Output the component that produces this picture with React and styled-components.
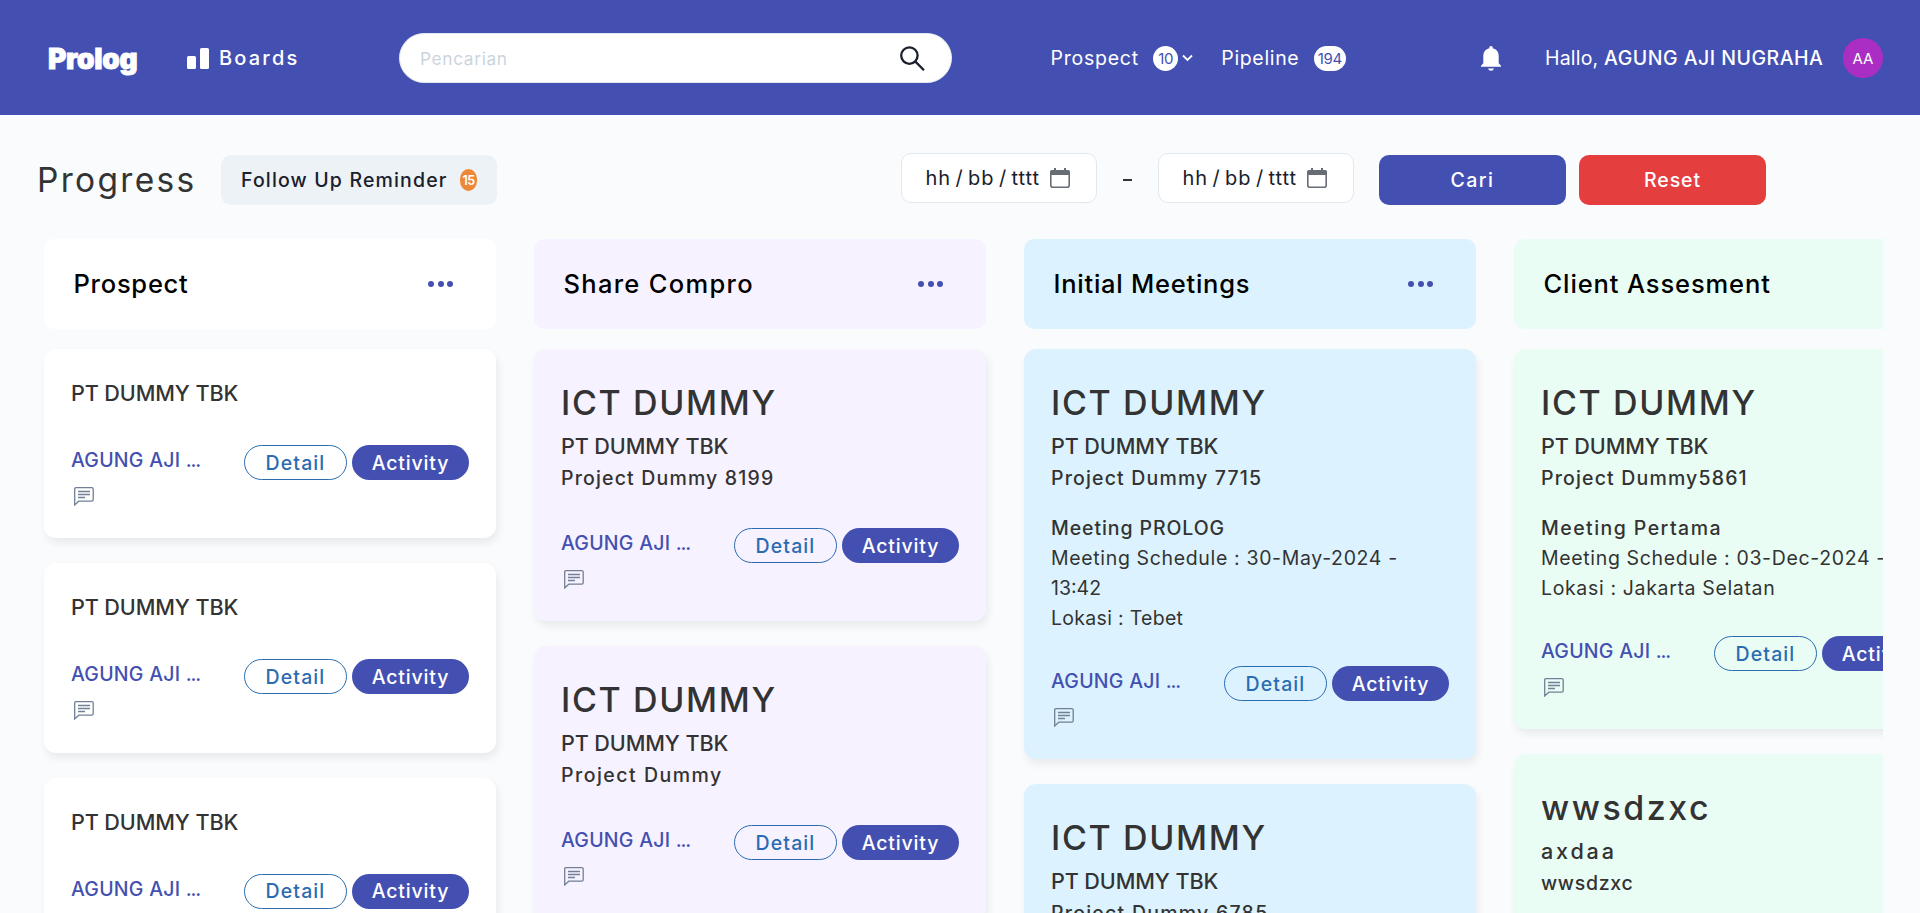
import React from "react";
import styled, { createGlobalStyle } from "styled-components";

const Global = createGlobalStyle`
  * { box-sizing: border-box; }
  html, body { margin: 0; height: 913px; overflow: hidden; background: #fafbfd; }
  body { font-family: Inter, "Liberation Sans", sans-serif; color: #333; }
`;

const Page = styled.div`
  width: 1920px;
  height: 913px;
  overflow: hidden;
  display: flex;
  flex-direction: column;
`;

const Txt = styled.span`
  white-space: nowrap;
  letter-spacing: ${(p) => p.$ls || 0}px;
`;

const Header = styled.header`
  flex: none;
  height: 115px;
  background: #4350b2;
  color: #fff;
  display: flex;
  align-items: center;
  padding: 1px 37px 0 47px;
  font-size: 19.5px;
`;

const Logo = styled.div`
  width: 140px;
  font-size: 28px;
  font-weight: 900;
  line-height: 40px;
  letter-spacing: -0.3px;
  -webkit-text-stroke: 0.9px #fff;
  padding: 2px 0 0 1px;
`;

const BoardsLink = styled.div`
  width: 212px;
  display: flex;
  align-items: center;
  gap: 10px;
  font-size: 20px;
  font-weight: 500;
`;

const Search = styled.div`
  width: 553px;
  height: 50px;
  border-radius: 25px;
  border: 1px solid #e2e8f0;
  background: #fff;
  color: #cbd5e0;
  font-size: 17.3px;
  display: flex;
  align-items: center;
  justify-content: space-between;
  padding: 0 26px 0 20px;
`;

const NavItem = styled.div`
  display: flex;
  align-items: center;
  margin-left: ${(p) => p.$ml}px;
`;

const CountBadge = styled.span`
  width: ${(p) => p.$w}px;
  height: 25px;
  border-radius: 12.5px;
  background: #fff;
  color: #4350b2;
  font-size: 15px;
  letter-spacing: -0.3px;
  display: flex;
  align-items: center;
  justify-content: center;
  margin-left: 14.5px;
  margin-right: 4px;
`;

const User = styled.div`
  margin-left: auto;
  display: flex;
  align-items: center;
`;

const Greeting = styled.div`
  width: 298px;
  white-space: nowrap;
`;

const Strong = styled(Txt)`
  font-weight: 500;
`;

const Avatar = styled.div`
  width: 40px;
  height: 40px;
  border-radius: 50%;
  background: #aa2ec4;
  font-size: 15px;
  display: flex;
  align-items: center;
  justify-content: center;
`;

const Toolbar = styled.section`
  flex: none;
  height: 124px;
  display: flex;
  align-items: flex-start;
  padding: 38px 154px 0 37px;
`;

const Title = styled.h1`
  margin: 2px 0 0;
  width: 184px;
  font-size: 33.5px;
  line-height: 50px;
  font-weight: 400;
`;

const Button = styled.button`
  border: 0;
  margin: 0;
  padding: 0;
  font-family: inherit;
  font-size: 19.5px;
  font-weight: 500;
  cursor: pointer;
`;

const Reminder = styled(Button)`
  width: 276px;
  height: 50px;
  margin-top: 2px;
  border-radius: 10px;
  background: #edf2f7;
  color: #1a202c;
  display: flex;
  align-items: center;
  justify-content: space-between;
  padding: 0 20px;
`;

const ReminderCount = styled.span`
  width: 17px;
  height: 22px;
  border-radius: 8.5px / 10px;
  background: #ed8936;
  color: #fff;
  font-size: 12.5px;
  font-weight: 600;
  letter-spacing: -0.6px;
  display: flex;
  align-items: center;
  justify-content: center;
`;

const Filters = styled.div`
  margin-left: auto;
  display: flex;
  align-items: flex-start;
`;

const DateField = styled.div`
  width: 196px;
  height: 50px;
  border: 1px solid #e2e8f0;
  border-radius: 10px;
  background: #fff;
  color: #1a202c;
  font-size: 20px;
  word-spacing: -2px;
  display: flex;
  align-items: center;
  justify-content: space-between;
  padding: 0 26.5px 0 23.5px;
`;

const Dash = styled.span`
  width: 61px;
  height: 50px;
  display: flex;
  align-items: center;
  justify-content: center;
  padding-top: 3px;

  &::before {
    content: "";
    width: 9px;
    height: 2px;
    background: #333;
  }
`;

const ActionButton = styled(Button)`
  width: 187px;
  height: 50px;
  margin: 2px 0 0 ${(p) => p.$ml}px;
  border-radius: 10px;
  background: ${(p) => p.$bg};
  color: #fff;
`;

const Board = styled.main`
  flex: 1;
  min-height: 0;
  width: 1883px;
  overflow: hidden;
  display: flex;
  gap: 38px;
  padding-left: 44px;
`;

const Column = styled.section`
  flex: none;
  width: 452px;
  display: flex;
  flex-direction: column;
`;

const ColumnHead = styled.div`
  flex: none;
  height: 90px;
  border-radius: 10px;
  background: ${(p) => p.$bg};
  color: #000;
  font-size: 25.5px;
  font-weight: 500;
  display: flex;
  align-items: center;
  justify-content: space-between;
  padding: 0 43px 2px 29.5px;
  margin-bottom: 20px;
`;

const Dots = styled.span`
  display: flex;
  gap: 3.4px;
  padding-top: 1px;

  i {
    width: 6px;
    height: 6px;
    border-radius: 50%;
    background: #4350b2;
  }
`;

const Card = styled.article`
  flex: none;
  border-radius: 12px;
  background: ${(p) => p.$bg};
  box-shadow: 2px 5px 8px rgba(0, 0, 0, 0.07);
  padding: ${(p) => (p.$compact ? 28 : 27)}px 27px 0;
  margin-bottom: 25px;
`;

const CardTitle = styled.h2`
  margin: 0;
  font-size: 34px;
  font-weight: 500;
  line-height: 54px;
`;

const Company = styled.div`
  font-size: 21.6px;
  font-weight: 500;
  line-height: 33px;
`;

const Project = styled.div`
  font-size: 19.5px;
  font-weight: 500;
  line-height: 30px;
`;

const Meeting = styled.div`
  margin-top: 20px;
  font-size: 19.5px;
  line-height: 30px;
`;

const CardFoot = styled.div`
  height: ${(p) => p.$h}px;
  margin-top: ${(p) => p.$mt}px;
  display: flex;
  justify-content: space-between;
`;

const Owner = styled.div`
  color: #4350b2;
  font-size: 19.5px;
  font-weight: 500;
  line-height: 30px;
  display: flex;
  flex-direction: column;
  gap: 12px;

  svg { margin-left: 2.5px; }
`;

const Actions = styled.div`
  display: flex;
  gap: 5px;
`;

const Pill = styled(Button)`
  width: ${(p) => (p.$solid ? 117 : 103)}px;
  height: 35px;
  border-radius: 18px;
  border: ${(p) => (p.$solid ? "0" : "1px solid #2b6cb0")};
  background: ${(p) => (p.$solid ? "#4350b2" : "transparent")};
  color: ${(p) => (p.$solid ? "#fff" : "#2b6cb0")};
`;

const BarsIcon = () => (
  <svg width="22" height="21" viewBox="0 0 22 21" fill="#fff">
    <rect x="0" y="8" width="9" height="13" rx="1.5" />
    <rect x="13" y="0" width="9" height="21" rx="1.5" />
  </svg>
);

const SearchIcon = () => (
  <svg width="25" height="25" viewBox="0 0 25 25" fill="none" stroke="#1a202c" strokeWidth="2.3">
    <circle cx="9.4" cy="9.6" r="8.2" />
    <path d="M15.4 15.6 24 24.2" />
  </svg>
);

const ChevronIcon = () => (
  <svg width="11" height="8" viewBox="0 0 11 8" fill="none" stroke="#fff" strokeWidth="1.8">
    <path d="m1 1.5 4.5 4.5L10 1.5" />
  </svg>
);

const BellIcon = () => (
  <svg width="20" height="25" viewBox="0 0 20 25" fill="#fff">
    <path d="M7 22.4h6q-.8 2.3-3 2.3t-3-2.3ZM0 20.800v-1l2.300-2.600V9.500Q2.700 3.500 8.200 2.200V1.800a1.800 1.800 0 0 1 3.600 0v.4q5.500 1.300 5.900 7.300v7.700l2.300 2.600v1Z" />
  </svg>
);

const CalendarIcon = () => (
  <svg width="20" height="20" viewBox="0 0 20 20">
    <path d="M5 0v3M15 0v3" stroke="#676c75" strokeWidth="2" />
    <rect x=".8" y="3" width="18.4" height="16.2" rx="2" fill="none" stroke="#676c75" strokeWidth="1.6" />
    <path d="M0 7V4q0-2 2-2h16q2 0 2 2v3Z" fill="#676c75" />
  </svg>
);

const CommentIcon = () => (
  <svg width="20" height="19" viewBox="0 0 20 19" fill="none" stroke="#718096" strokeWidth="1.3">
    <path d="M.7 17.9V2Q.7.7 2 .7h15.800q1.400 0 1.400 1.400v10.700q0 1.400-1.400 1.400H4.800Z" />
    <path d="M4 4.500h12M4 7.500h12M4 10.500h7" />
  </svg>
);

const columns = [
  {
    title: "Prospect", bg: "#ffffff", ls: 0.75,
    cards: [{ company: "PT DUMMY TBK" }, { company: "PT DUMMY TBK" }, { company: "PT DUMMY TBK" }],
  },
  {
    title: "Share Compro", bg: "#f7f2ff", ls: 1.3,
    cards: [
      { title: "ICT DUMMY", company: "PT DUMMY TBK", project: "Project Dummy 8199" },
      { title: "ICT DUMMY", company: "PT DUMMY TBK", project: "Project Dummy" },
    ],
  },
  {
    title: "Initial Meetings", bg: "#dcf3ff", ls: 0.75,
    cards: [
      {
        title: "ICT DUMMY", company: "PT DUMMY TBK", project: "Project Dummy 7715",
        meeting: ["Meeting PROLOG", "Meeting Schedule : 30-May-2024 -", "13:42", "Lokasi : Tebet"],
      },
      { title: "ICT DUMMY", company: "PT DUMMY TBK", project: "Project Dummy 6785" },
    ],
  },
  {
    title: "Client Assesment", bg: "#eafdf5", ls: 0.88,
    cards: [
      {
        title: "ICT DUMMY", company: "PT DUMMY TBK", project: "Project Dummy5861",
        meeting: ["Meeting Pertama", "Meeting Schedule : 03-Dec-2024 -", "Lokasi : Jakarta Selatan"],
      },
      { title: "wwsdzxc", titleLs: 2.5, company: "axdaa", companyLs: 2.8, project: "wwsdzxc", projectLs: 0.7 },
    ],
  },
];

// Letter spacing of the lines whose width differs from the default tracking.
const tracking = {
  "Project Dummy": 1.5,
  "Project Dummy 6785": 1.25,
  "Meeting PROLOG": 0.9,
  "Meeting Pertama": 1.45,
  "13:42": 0,
  "Lokasi : Tebet": 0.3,
};

function BoardCard({ card, bg }) {
  const gap = card.meeting ? 33 : 35;
  return (
    <Card $bg={bg} $compact={!card.title}>
      {card.title && <CardTitle><Txt $ls={card.titleLs ?? 1.65}>{card.title}</Txt></CardTitle>}
      <Company><Txt $ls={card.companyLs ?? -0.12}>{card.company}</Txt></Company>
      {card.project && (
        <Project><Txt $ls={card.projectLs ?? tracking[card.project] ?? 1.17}>{card.project}</Txt></Project>
      )}
      {card.meeting && (
        <Meeting>
          {card.meeting.map((line, i) => {
            const Line = i === 0 ? Strong : Txt;
            return <div key={line}><Line $ls={tracking[line] ?? 0.65}>{line}</Line></div>;
          })}
        </Meeting>
      )}
      <CardFoot $mt={gap} $h={card.meeting ? 93 : card.title ? 93.4 : 93.3}>
        <Owner>
          <Txt $ls={0.25}>AGUNG AJI <Txt $ls={-1.1}>...</Txt></Txt>
          <CommentIcon />
        </Owner>
        <Actions>
          <Pill><Txt $ls={1.1}>Detail</Txt></Pill>
          <Pill $solid><Txt $ls={0.85}>Activity</Txt></Pill>
        </Actions>
      </CardFoot>
    </Card>
  );
}

export default function App() {
  return (
    <Page>
      <Global />
      <Header>
        <Logo>Prolog</Logo>
        <BoardsLink><BarsIcon /><Txt $ls={2.2}>Boards</Txt></BoardsLink>
        <Search><Txt $ls={0.65}>Pencarian</Txt><SearchIcon /></Search>
        <NavItem $ml={98.5}><Txt $ls={0.75}>Prospect</Txt><CountBadge $w={25}>10</CountBadge><ChevronIcon /></NavItem>
        <NavItem $ml={28}><Txt $ls={0.65}>Pipeline</Txt><CountBadge $w={32}>194</CountBadge></NavItem>
        <User>
          <BellIcon />
          <NavItem $ml={44.5}>
            <Greeting><Txt $ls={0.2}>Hallo, </Txt><Strong $ls={0.5}>AGUNG AJI NUGRAHA</Strong></Greeting>
          </NavItem>
          <Avatar>AA</Avatar>
        </User>
      </Header>
      <Toolbar>
        <Title><Txt $ls={2.3}>Progress</Txt></Title>
        <Reminder><Txt $ls={1.15}>Follow Up Reminder</Txt><ReminderCount>15</ReminderCount></Reminder>
        <Filters>
          <DateField><Txt $ls={0.9}>hh / bb / tttt</Txt><CalendarIcon /></DateField>
          <Dash />
          <DateField><Txt $ls={0.9}>hh / bb / tttt</Txt><CalendarIcon /></DateField>
          <ActionButton $bg="#4350b2" $ml={25}><Txt $ls={1.5}>Cari</Txt></ActionButton>
          <ActionButton $bg="#e53e3e" $ml={13}><Txt $ls={0.9}>Reset</Txt></ActionButton>
        </Filters>
      </Toolbar>
      <Board>
        {columns.map((col) => (
          <Column key={col.title}>
            <ColumnHead $bg={col.bg}>
              <Txt $ls={col.ls}>{col.title}</Txt>
              <Dots><i /><i /><i /></Dots>
            </ColumnHead>
            {col.cards.map((card, i) => <BoardCard key={i} card={card} bg={col.bg} />)}
          </Column>
        ))}
      </Board>
    </Page>
  );
}
